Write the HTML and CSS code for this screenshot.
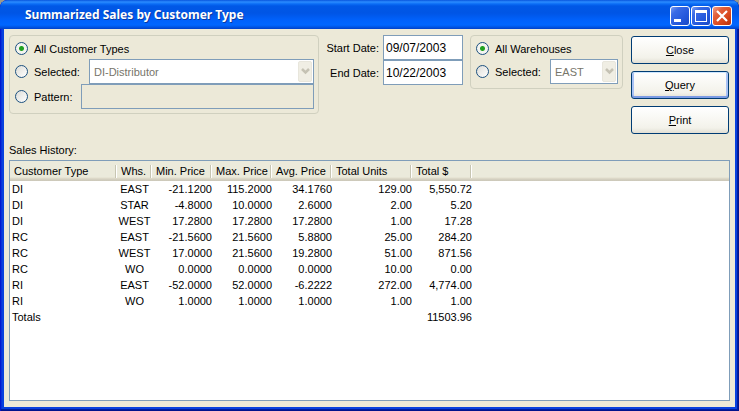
FILE: index.html
```html
<!DOCTYPE html>
<html lang="en">
<head>
<meta charset="utf-8">
<title>Summarized Sales by Customer Type</title>
<link rel="stylesheet" href="styles.css">
</head>
<body>
<div class="window">
  <header class="titlebar">
    <h1>Summarized Sales by Customer Type</h1>
    <div class="caption-buttons">
      <button class="caption" type="button" aria-label="Minimize"><svg width="18" height="18"><path d="M3 12h7v3H3z" fill="#fff"/></svg></button>
      <button class="caption" type="button" aria-label="Maximize"><svg width="18" height="18"><path d="M3 3h12v12H3zM4 6v8h10V6z" fill="#fff" fill-rule="evenodd"/></svg></button>
      <button class="caption caption-close" type="button" aria-label="Close window"><svg width="18" height="18"><path d="M4 4l10 10M14 4L4 14" stroke="#fff" stroke-width="2.200"/></svg></button>
    </div>
  </header>
  <main class="client">
    <form class="filters">
      <div class="group">
        <div class="row row-all"><input type="radio" name="ctype" id="ct-all" checked><label for="ct-all">All Customer Types</label></div>
        <div class="row">
          <input type="radio" name="ctype" id="ct-sel"><label class="wide-label" for="ct-sel">Selected:</label>
          <div class="combo">
            <select aria-label="Customer type" disabled><option>DI-Distributor</option></select>
            <span class="arrow"><svg width="9" height="7"><path d="M1 1l3.500 3.500L8 1" fill="none" stroke="#c5c2b4" stroke-width="2.500"/></svg></span>
          </div>
        </div>
        <div class="row">
          <input type="radio" name="ctype" id="ct-pat"><label class="short-label" for="ct-pat">Pattern:</label>
          <input class="field pattern" type="text" aria-label="Customer type pattern" disabled>
        </div>
      </div>
      <div class="dates">
        <label for="start">Start Date:</label><input class="field" id="start" type="text" value="09/07/2003">
        <label for="end">End Date:</label><input class="field" id="end" type="text" value="10/22/2003">
      </div>
      <div class="group">
        <div class="row row-all"><input type="radio" name="whs" id="wh-all" checked><label for="wh-all">All Warehouses</label></div>
        <div class="row">
          <input type="radio" name="whs" id="wh-sel"><label class="wide-label" for="wh-sel">Selected:</label>
          <div class="combo combo-small">
            <select aria-label="Warehouse" disabled><option>EAST</option></select>
            <span class="arrow"><svg width="9" height="7"><path d="M1 1l3.500 3.500L8 1" fill="none" stroke="#c5c2b4" stroke-width="2.500"/></svg></span>
          </div>
        </div>
      </div>
      <div class="actions">
        <button class="action" type="button"><u>C</u>lose</button>
        <button class="action action-default" type="button"><u>Q</u>uery</button>
        <button class="action" type="button"><u>P</u>rint</button>
      </div>
    </form>
    <h2 id="history">Sales History:</h2>
    <div class="list">
      <table aria-labelledby="history">
        <colgroup><col class="c-type"><col class="c-whs"><col class="c-num"><col class="c-num"><col class="c-num"><col class="c-units"><col class="c-num"><col></colgroup>
        <thead><tr><th>Customer Type</th><th>Whs.</th><th>Min. Price</th><th>Max. Price</th><th>Avg. Price</th><th>Total Units</th><th>Total $</th><th></th></tr></thead>
        <tbody>
          <tr><td>DI</td><td>EAST</td><td>-21.1200</td><td>115.2000</td><td>34.1760</td><td>129.00</td><td>5,550.72</td><td></td></tr>
          <tr><td>DI</td><td>STAR</td><td>-4.8000</td><td>10.0000</td><td>2.6000</td><td>2.00</td><td>5.20</td><td></td></tr>
          <tr><td>DI</td><td>WEST</td><td>17.2800</td><td>17.2800</td><td>17.2800</td><td>1.00</td><td>17.28</td><td></td></tr>
          <tr><td>RC</td><td>EAST</td><td>-21.5600</td><td>21.5600</td><td>5.8800</td><td>25.00</td><td>284.20</td><td></td></tr>
          <tr><td>RC</td><td>WEST</td><td>17.0000</td><td>21.5600</td><td>19.2800</td><td>51.00</td><td>871.56</td><td></td></tr>
          <tr><td>RC</td><td>WO</td><td>0.0000</td><td>0.0000</td><td>0.0000</td><td>10.00</td><td>0.00</td><td></td></tr>
          <tr><td>RI</td><td>EAST</td><td>-52.0000</td><td>52.0000</td><td>-6.2222</td><td>272.00</td><td>4,774.00</td><td></td></tr>
          <tr><td>RI</td><td>WO</td><td>1.0000</td><td>1.0000</td><td>1.0000</td><td>1.00</td><td>1.00</td><td></td></tr>
          <tr><td>Totals</td><td></td><td></td><td></td><td></td><td></td><td>11503.96</td><td></td></tr>
        </tbody>
      </table>
    </div>
  </main>
</div>
</body>
</html>
```
FILE: styles.css
```css
* { box-sizing: border-box; }

body {
  margin: 0;
  background: #9c9a8c;
  color: #000;
  font: 11px/16px "Liberation Sans", Arial, sans-serif;
}

button, input, select { font: inherit; color: inherit; margin: 0; }

.window {
  display: flex;
  flex-direction: column;
  min-height: 100vh;
  padding: 0 4px 4px;
  border-radius: 8px 8px 0 0;
  background: #0841de;
  box-shadow: inset 1px 0 #0019cf, inset -1px -1px #00138c, inset -2px -2px #001ea0, inset 2px 0 #0831d9;
}

/* Title bar */
.titlebar {
  display: flex;
  align-items: center;
  justify-content: space-between;
  height: 29px;
  margin: 0 -4px;
  padding: 1px 7px 0 25px;
  border-radius: 8px 8px 0 0;
  background: linear-gradient(#0855dd 0, #2b8cff 2px, #0a6cf5 4px, #0058e6 6px, #0055e5 13px, #0061fb 20px, #0066ff 25px, #0055e5 27px, #0040c8 29px);
}

.titlebar h1 {
  margin: 0;
  color: #fff;
  font: bold 12px/18px "Noto Sans", "Open Sans", sans-serif;
  text-shadow: 1px 1px #0a3aa0;
}

.caption-buttons { display: flex; gap: 1px; padding-top: 2px; }

.caption {
  width: 20px;
  height: 20px;
  padding: 0;
  border: 1px solid #fff;
  border-radius: 3px;
  background: linear-gradient(135deg, #7a9df2 0, #3a6be6 25%, #2458dc 65%, #1c4bc4 100%);
}

.caption-close { background: linear-gradient(135deg, #f0a088 0, #e2603c 30%, #d9481d 65%, #b8300c 100%); }
.caption svg { display: block; }

/* Client area */
.client {
  display: flex;
  flex: 1;
  flex-direction: column;
  padding: 6px 5px;
  background: #ece9d8;
}

.filters {
  display: grid;
  grid-template-columns: 1fr auto auto auto;
  align-items: start;
  gap: 7px;
}

.group {
  padding: 2px 4px 4px 5px;
  border: 1px solid #d0d0bf;
  border-radius: 4px;
}

.row { display: flex; align-items: center; height: 25px; }
.row-all { height: 21px; }

input[type="radio"] {
  flex: none;
  width: 13px;
  height: 13px;
  margin-right: 6px;
  appearance: none;
  border: 1px solid #1c5180;
  border-radius: 50%;
  background: linear-gradient(135deg, #dcdcd7, #fff);
}

input[type="radio"]:checked { background: radial-gradient(circle, #21a121 0 2px, #f4f4f0 3px); }

.wide-label { width: 55px; }
.short-label { width: 47px; }

.combo { position: relative; flex: 1; }
.combo-small { flex: none; width: 68px; }

.combo select {
  display: block;
  width: 100%;
  height: 25px;
  padding: 0 20px 0 4px;
  appearance: none;
  border: 1px solid #7f9db9;
  border-radius: 0;
  background: #fff;
  color: #77756a;
  opacity: 1;
}

.arrow {
  position: absolute;
  top: 2px;
  right: 2px;
  bottom: 2px;
  display: flex;
  align-items: center;
  justify-content: center;
  width: 14px;
  border: 1px solid #e8e6dc;
  border-radius: 2px;
  background: #f0eee4;
  pointer-events: none;
}

.field {
  width: 80px;
  height: 25px;
  padding: 0 2px;
  border: 1px solid #7f9db9;
  background: #fff;
}

.pattern { flex: 1; min-width: 0; background: #ece9d8; }

.dates {
  display: grid;
  grid-template-columns: auto auto;
  align-items: center;
  column-gap: 4px;
  text-align: right;
}

.dates .field { font-size: 12px; }

.actions {
  display: grid;
  gap: 7px;
  width: 100px;
  padding: 1px 1px 0;
}

.action {
  height: 28px;
  padding: 0;
  border: 1px solid #003c74;
  border-radius: 3px;
  background: linear-gradient(#fff, #f3f2ea 80%, #e2dfd4);
}

.action-default { box-shadow: inset 0 1px #cee7ff, inset 0 -2px #7b9be4, inset 2px 0 #a9c2f4, inset -2px 0 #a9c2f4; }

/* Results */
.client h2 {
  margin: 8px 0 2px;
  font: inherit;
}

.list {
  flex: 1;
  border: 1px solid #7f9db9;
  background: #fff;
}

table {
  width: 100%;
  table-layout: fixed;
  border-collapse: collapse;
}

.c-type { width: 107px; }
.c-whs { width: 35px; }
.c-num { width: 60px; }
.c-units { width: 80px; }

th {
  height: 20px;
  padding: 0 0 0 4px;
  background: linear-gradient(90deg, #c7c5b2 1px, #fff 1px) right center / 2px 13px no-repeat, linear-gradient(#ebeadb 16px, #e2decd 17px, #d6d2c2 18px, #cbc7b8 20px);
  font-weight: normal;
  text-align: left;
  white-space: nowrap;
}

th:last-child { background: linear-gradient(#ebeadb 16px, #e2decd 17px, #d6d2c2 18px, #cbc7b8 20px); }

td {
  height: 16px;
  padding: 0;
  text-align: right;
  white-space: nowrap;
}

td:first-child { padding-left: 2px; text-align: left; }
td:nth-child(2) { text-align: center; }
```
